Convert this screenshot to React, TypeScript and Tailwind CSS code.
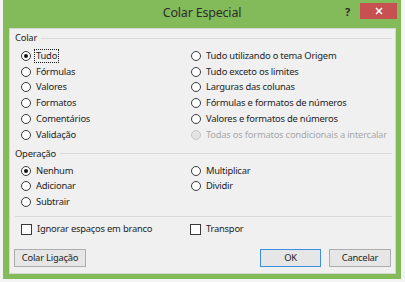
import React from 'react';
import clsx from 'clsx';

type RadioProps = {
  label: string;
  checked?: boolean;
  disabled?: boolean;
  focused?: boolean;
};

// botão de opção no estilo Windows 8
function Radio({ label, checked = false, disabled = false, focused = false }: RadioProps) {
  return (
    <div className="flex h-[15.8px] items-center gap-[3px]">
      <span
        className={clsx(
          'flex h-[10px] w-[10px] shrink-0 items-center justify-center rounded-full border',
          disabled ? 'border-[#c6c6c6] bg-[#e4e4e4]' : 'border-[#3a3a3a] bg-white'
        )}
      >
        {checked && <span className="h-[4px] w-[4px] rounded-full bg-[#151515]" />}
      </span>
      <span
        className={clsx(
          'whitespace-nowrap border px-[1px] leading-[12px]',
          focused ? 'border-dotted border-[#1a1a1a]' : 'border-transparent',
          disabled ? 'text-[#a8a8a8]' : 'text-[#1e1e1e]'
        )}
      >
        {label}
      </span>
    </div>
  );
}

function Checkbox({ label }: { label: string }) {
  return (
    <div className="flex h-[15.8px] items-center gap-[3px]">
      <span className="h-[11px] w-[11px] shrink-0 border border-[#3a3a3a] bg-white" />
      <span className="whitespace-nowrap border border-transparent px-[1px] leading-[12px]">{label}</span>
    </div>
  );
}

function GroupHeader({ title }: { title: string }) {
  return (
    <div className="flex h-[14px] items-center gap-[4px]">
      <span className="leading-none">{title}</span>
      <span className="h-px flex-1 bg-[#dadada]" />
    </div>
  );
}

function DialogButton({ children, primary = false, className }: { children: React.ReactNode; primary?: boolean; className?: string }) {
  return (
    <button
      className={clsx(
        'flex h-[18px] items-center justify-center border bg-[#e6e6e6] leading-none text-[#1e1e1e]',
        primary ? 'border-[#3d8ee0]' : 'border-[#adadad]',
        className
      )}
    >
      {children}
    </button>
  );
}

export default function App() {
  return (
    <div className="h-[282px] w-[405px] bg-[#f4f4f4] font-['Segoe_UI','Noto_Sans',sans-serif] text-[9.4px] tracking-[-0.22px] text-[#1e1e1e]">
      <div className="ml-[3px] flex h-[279px] w-[398px] flex-col bg-[#83ba5a]">
        {/* barra de título */}
        <div className="grid h-[28px] grid-cols-[1fr_auto_1fr]">
          <div />
          <div className="self-center pb-[1px] text-[12.5px] leading-none tracking-[-0.2px] text-[#2d2d2d]">Colar Especial</div>
          <div className="flex items-start justify-end pr-[4px] pt-[3px]">
            <span className="mr-[10px] mt-[3px] text-[11px] font-bold leading-none text-[#2a2a2a]">?</span>
            <button className="flex h-[16px] w-[37px] items-center justify-center bg-[#c75050]">
              <svg width="8" height="8" viewBox="0 0 8 8">
                <path d="M1 1 L7 7 M7 1 L1 7" stroke="#fff" strokeWidth="1.6" />
              </svg>
            </button>
          </div>
        </div>

        {/* corpo do diálogo */}
        <div className="mb-[5px] ml-[6px] mr-[5px] flex flex-1 flex-col border border-[#d6d6d6] bg-[#f0f0f0] pl-[5px] pr-[3px] pt-[2px]">
          <GroupHeader title="Colar" />
          <div className="ml-[6px] mt-[3px] grid grid-cols-[170px_1fr]">
            <div>
              <Radio label="Tudo" checked focused />
              <Radio label="Fórmulas" />
              <Radio label="Valores" />
              <Radio label="Formatos" />
              <Radio label="Comentários" />
              <Radio label="Validação" />
            </div>
            <div>
              <Radio label="Tudo utilizando o tema Origem" />
              <Radio label="Tudo exceto os limites" />
              <Radio label="Larguras das colunas" />
              <Radio label="Fórmulas e formatos de números" />
              <Radio label="Valores e formatos de números" />
              <Radio label="Todas os formatos condicionais a intercalar" disabled />
            </div>
          </div>

          <div className="mt-[4px]">
            <GroupHeader title="Operação" />
          </div>
          <div className="ml-[6px] mt-[2px] grid grid-cols-[170px_1fr]">
            <div>
              <Radio label="Nenhum" checked />
              <Radio label="Adicionar" />
              <Radio label="Subtrair" />
            </div>
            <div>
              <Radio label="Multiplicar" />
              <Radio label="Dividir" />
            </div>
          </div>

          <div className="mt-[6px] h-px bg-[#dadada]" />
          <div className="ml-[6px] mt-[4px] grid grid-cols-[169px_1fr]">
            <Checkbox label="Ignorar espaços em branco" />
            <Checkbox label="Transpor" />
          </div>

          <div className="mt-[12px] flex items-center pr-[1px]">
            <DialogButton className="-ml-px w-[72px]">Colar Ligação</DialogButton>
            <div className="flex-1" />
            <DialogButton primary className="w-[61px]">OK</DialogButton>
            <DialogButton className="ml-[8px] w-[62px]">Cancelar</DialogButton>
          </div>
        </div>
      </div>
    </div>
  );
}
